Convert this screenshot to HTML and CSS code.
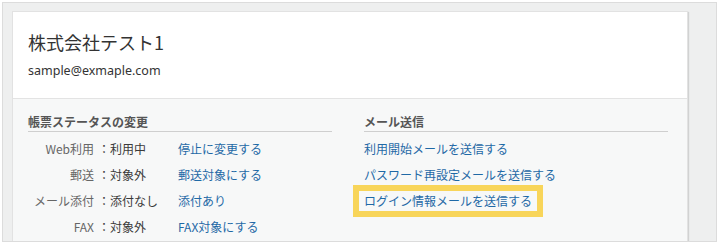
FILE: index.html
```html
<!DOCTYPE html>
<html lang="ja">

<head>
  <meta charset="UTF-8">
  <meta name="viewport" content="width=device-width, initial-scale=1.0">
  <title>Document</title>
  <link rel="stylesheet" href="styles.css">
</head>

<body>
  <div class="frame">
    <div class="card">
      <div class="head">
        <h1>株式会社テスト1</h1>
        <p class="mail">sample@exmaple.com</p>
      </div>
      <div class="body">
        <div class="col">
          <h2>帳票ステータスの変更</h2>
          <div class="status">
            <span class="label">Web利用</span><span class="val">：利用中</span><a href="#">停止に変更する</a>
            <span class="label">郵送</span><span class="val">：対象外</span><a href="#">郵送対象にする</a>
            <span class="label">メール添付</span><span class="val">：添付なし</span><a href="#">添付あり</a>
            <span class="label">FAX</span><span class="val">：対象外</span><a href="#">FAX対象にする</a>
          </div>
        </div>
        <div class="col">
          <h2>メール送信</h2>
          <ul class="links">
            <li><a href="#">利用開始メールを送信する</a></li>
            <li><a href="#">パスワード再設定メールを送信する</a></li>
            <li><a href="#" class="mark">ログイン情報メールを送信する</a></li>
          </ul>
        </div>
      </div>
    </div>
  </div>
</body>

</html>
```

FILE: styles.css
```css
body {
  margin: 0;
  padding: 2px;
  background: #fff;
  font-family: "Noto Sans", "Noto Sans CJK JP", sans-serif;
  color: #333;
}

.frame {
  height: 230px;
  overflow: hidden;
  border: 1px solid #dcdcdc;
  background: #eeefef;
  padding: 8px 26px 0 9px;
}

.card {
  width: 674px;
  height: 240px;
  background: #f7f8f8;
  border: 1px solid #e2e2e2;
  box-shadow: 1px 1px 1px rgba(0, 0, 0, .12);
}

.head {
  background: #fff;
  padding: 18px 15px 17px;
  border-bottom: 1px solid #e3e3e3;
}

h1 {
  margin: 0;
  font-size: 18px;
  font-weight: 400;
  line-height: 24px;
  font-family: "Noto Sans CJK JP", sans-serif;
}

.mail {
  margin: 7px 0 0;
  font-size: 12.5px;
  line-height: 20px;
}

.body {
  display: grid;
  grid-template-columns: 304px 304px;
  column-gap: 32px;
  padding: 14px 0 0 15px;
  font-family: "Noto Sans CJK JP", sans-serif;
  font-size: 12px;
}

h2 {
  margin: 0 0 4px;
  font-size: 12px;
  font-weight: 700;
  line-height: 18px;
  color: #555;
  border-bottom: 1px solid #cfcfcf;
}

.status {
  display: grid;
  grid-template-columns: 66px 76px auto;
  column-gap: 4px;
  line-height: 26px;
}

.label {
  text-align: right;
  color: #666;
}

.val {
  color: #3a3a3a;
}

a {
  color: #1f69a6;
  text-decoration: none;
}

.links {
  list-style: none;
  margin: 0;
  padding: 0;
  line-height: 26px;
}

.mark {
  display: inline-block;
  line-height: 20px;
  padding: 0 5px;
  margin-left: -5px;
  outline: 6px solid #f8d55a;
}
```
